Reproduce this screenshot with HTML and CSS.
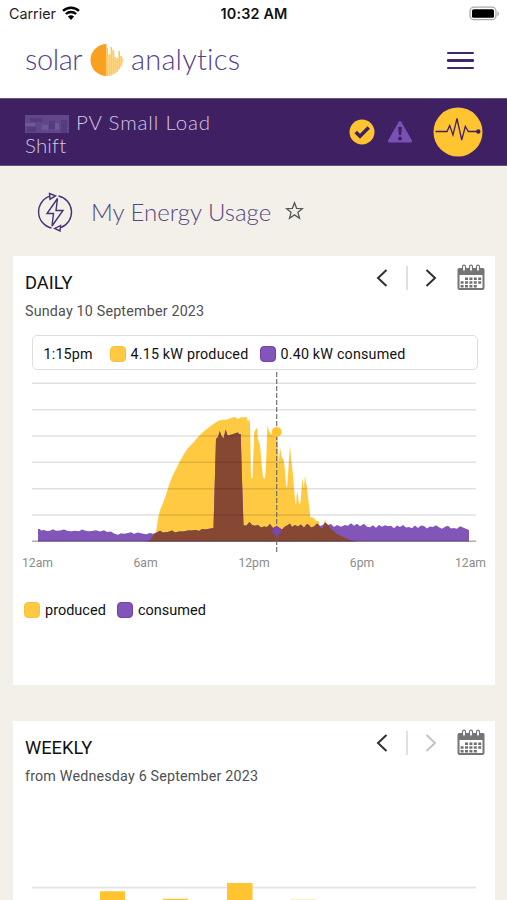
FILE: index.html
```html
<!DOCTYPE html>
<html lang="en">
<head>
<meta charset="utf-8">
<title>My Energy Usage</title>
<link rel="stylesheet" href="styles.css">
</head>
<body>
<svg class="defs" width="0" height="0">
  <defs>
    <symbol id="calendar" viewBox="0 0 28 27">
      <path d="M2 4h24a1.500 1.500 0 0 1 1.500 1.500V24a2 2 0 0 1-2 2H2.500a2 2 0 0 1-2-2V5.500A1.500 1.500 0 0 1 2 4z" fill="#757575"/>
      <path d="M2.500 11h23v13h-23z" fill="#fff"/>
      <g fill="#fff" stroke="#757575" stroke-width="1.200"><rect x="5.500" y="1.200" width="3" height="6" rx="1.500"/><rect x="12.500" y="1.200" width="3" height="6" rx="1.500"/><rect x="19.500" y="1.200" width="3" height="6" rx="1.500"/></g>
      <g stroke="#707070" stroke-width="2.400" stroke-dasharray="3 1.400"><path d="M8 14.800h17M3.600 18.500h21M3.600 22.200h17"/></g>
    </symbol>
    <symbol id="chevron" viewBox="0 0 12 20"><path d="M10.500 2 2 10l8.500 8" fill="none" stroke="currentColor" stroke-width="2"/></symbol>
  </defs>
</svg>

<div class="status">
  <div class="carrier"><span>Carrier</span>
    <svg width="18" height="14" viewBox="0 0 18 14" fill="none" stroke="#000" stroke-width="2.400"><path d="M1 4.900a11.600 11.600 0 0 1 16 0M3.900 8a7.400 7.400 0 0 1 10.200 0"/><path d="M9 14 5.900 10.600a4.500 4.500 0 0 1 6.200 0z" fill="#000" stroke="none"/></svg>
  </div>
  <div class="clock">10:32 AM</div>
  <svg class="battery" width="32" height="16" viewBox="0 0 32 16"><rect x="2" y="1.200" width="26" height="12.500" rx="4" fill="#fff" stroke="#aaa" stroke-width="1.300"/><rect x="4" y="3.200" width="22" height="8.500" rx="1.500" fill="#000"/><path d="M29.500 5.300v5c2-1 2-4 0-5z" fill="#aaa"/></svg>
</div>

<header class="header">
  <div class="logo">
    <span class="logo-solar">solar</span>
    <svg width="34" height="34" viewBox="0 0 34 34">
      <path d="M16.500 1a16 16 0 0 0 0 32z" fill="#f9a01f"/>
      <g fill="#ffc957"><path d="M16.500 5h1.500v28h-1.500zM18.500 12h1.500v20.800h-1.500zM20.500 4h1.500v28.200h-1.500zM22.500 7h1.500v24.200h-1.500zM24.500 14h1.500v16h-1.500zM26.500 15h1.500v13.500h-1.500zM28.500 8h1.500v18h-1.500zM30.500 13h1.500v10h-1.500zM32.300 15h.8v5h-.8z"/></g>
      <path d="M16.500 11h5v21.500l-5 .5zM21.500 8h3v23l-3 1zM24.500 16h4v12l-4 3zM28.500 13h3.500v10l-3.500 4z" fill="#ffc957" opacity=".5"/>
    </svg>
    <span class="logo-analytics">analytics</span>
  </div>
  <div class="menu"><i></i><i></i><i></i></div>
</header>

<section class="site">
  <div class="site-name">
    <svg width="44" height="18" viewBox="0 0 44 18"><path d="M0 0h44v18H0z" fill="#60468b"/><path d="M5 3h12v4H5zM2 12h9v5H2zM24 6h6v8h-6zM36 5h6v13h-6z" fill="#553b80"/><path d="M0 8h10v3H0zM17 10h6v5h-6zM30 8h4v7h-4z" fill="#705796"/></svg><span class="first">PV Small Load</span><br><span class="second">Shift</span>
  </div>
  <svg class="ok" width="26" height="26" viewBox="0 0 26 26"><circle cx="13" cy="13" r="12.500" fill="#ffc42f"/><path d="m6.700 13 4.300 4.300 8.700-8.800" fill="none" stroke="#3e2063" stroke-width="3.500"/></svg>
  <svg class="warn" width="26" height="24" viewBox="0 0 26 24"><path d="M13 2.500 23.500 21h-21z" fill="#7b50b4" stroke="#7b50b4" stroke-width="3" stroke-linejoin="round"/><path d="M11.200 7h3.600l-.6 8h-2.400z" fill="#3e2063"/><circle cx="13" cy="18.500" r="1.900" fill="#3e2063"/></svg>
  <svg class="pulse" width="50" height="50" viewBox="0 0 50 50"><circle cx="25" cy="25" r="24.500" fill="#ffc42f"/><path d="M2.500 24.500H14l2.700-6 3.300 9.500L24 11.500 28.700 33l3.600-13.500 3 5H45" fill="none" stroke="#3e2063" stroke-width="1.300"/><circle cx="45.300" cy="24.500" r="2.200" fill="#3e2063"/></svg>
</section>

<div class="title">
  <svg width="36" height="40" viewBox="0 0 36 40" fill="none" stroke="#463274" stroke-width="1.400">
    <path d="M21.500 4A16.500 16.500 0 0 1 24 35.500M14.500 36A16.500 16.500 0 0 1 13 4.200"/>
    <path d="m12.500 1.500 6 2.300-5.500 3.400zM23.500 33.500l-5.800 3 5.300 2.500z"/>
    <path d="M20.500 6.500 10 21.500h6.500L15 34l11-15.500h-7z"/>
  </svg>
  <h1>My Energy Usage</h1>
  <svg class="star" width="19" height="19" viewBox="0 0 19 19"><path d="m9.500 1.800 2.100 5.500 5.900.4-4.600 3.600 1.600 5.900-5-3.300-5 3.300 1.600-5.900-4.600-3.600 5.900-.4z" fill="none" stroke="#555" stroke-width="1.300"/></svg>
</div>

<main>
  <article class="card daily">
    <div class="card-head">
      <div><h2>DAILY</h2><p>Sunday 10 September 2023</p></div>
      <div class="nav">
        <svg class="prev" width="12" height="20"><use href="#chevron"/></svg><i></i>
        <svg class="next" width="12" height="20"><use href="#chevron"/></svg>
        <svg class="cal" width="28" height="27"><use href="#calendar"/></svg>
      </div>
    </div>
    <div class="readout">
      <span class="time">1:15pm</span>
      <b class="swatch yellow"></b><span class="made">4.15 kW produced</span>
      <b class="swatch purple"></b><span class="used">0.40 kW consumed</span>
    </div>
    <svg class="chart" width="482" height="205" viewBox="13 370 482 205">
      <defs>
        <path id="produced" d="M146 541.500 150 540 154 535 156 532 158 519 160 510 163 503 166 495 169 485 172 477 176 469 180 461 184 454 188 448 193 443 198 437 203 432 208 428 214 423.500 219 420.500 222 420 227 419.500 231 418 235 417 238 419 240 417.500 246.700 417 248 422 249 419 250 422 251 478 252.500 478 254.300 430 255 432 255.700 429 257.300 428 257.700 438 260 445 261.700 465 263 477 265 479 266 465 267.500 425 268.700 430 270.700 434 277.700 436 278.700 464 280 447 281.700 457 283.700 460 285 470 286 485 287 488 288 475 289.300 455 290 445 291 458 292.700 472 294 488 295.300 503 296 505 296.700 495 297.700 492 298.700 502 300 505 301 498 301.700 485 302.700 478 303.300 486 304 488 305 475 305.700 482 306.700 485 307.700 495 309 505 310.300 517 314 518 316 521 318.700 521 320 528 323 528 324.700 520 327.300 524 329 526 332 530 337 534 343 537 350 540 357 541.500z"/>
        <path id="consumed" d="M38 541.500V529h2l1 1.500 3-.5 3 1 3-.3 3-1.500 3 1.500 4-.2 4-1 4 1.500 3 .2 4-.5 4 .6 3-1.800 2 .7 4 1 4-.2 4-.8 4 1.300 4-1.200 3 1.800 4-.5 3 2 4 1.200 3-1.500 3 .5 4-.8 3-.7 3 1.500 4-1.300 4 1 4 .8 4-1.300 3 .7 4-1.200 3-1.700 3 1.800 5-.5 4-1.700 3 2 4-1 4 .2 5-1 4-.2 4-.5 3 1 3-2 3 .7L213.500 528 216 439 218 437 219.700 431 221.500 436 223.500 438.500 225.700 429.500 227.500 435.500 232 434.500 236 433 238 432.500 239 434 240.700 434 242 480 243.500 525.500h3l3-3.500 2.500 3 3 .7 3-.7 3 2.500 3-1 3 .5 3-3 3 4 3-1.500 3 1 3 2 3-3 3-1.500 2-1.500 2 3.500 3-2 3 1.500 3-2 3 3 3-3.500 2 1 2 2.500 3-1 3-3 3 2.500 3-1 2-2.500 3 2.500 3-1 3 3 3-2 4 1.700 4-1.700 3 .7 3-2.500 3 2.500 3-2 3 2.500 4-2.500 3 3 3 .5 3-2 3 2.500 3-2.700 3 1.700 3-1.500 3 1 3-.5 3 2.500 3-2.800 3 1.500 3-2 3 2.500 3-.5 3 1.300 3-2.800 3 2.500 3-2.500 3 .5 3 2.500 3-2 3 .5 3-1.700 3 2 3 1.500 3-2 3-1 3 2.800 3-.5 3 .8 3-2.500 3 1.200L469 530V541.500z"/>
        <clipPath id="overlap"><use href="#produced"/></clipPath>
      </defs>
      <use href="#produced" fill="#ffc942"/>
      <use href="#consumed" fill="#8256b8"/>
      <use href="#consumed" fill="#874833" clip-path="url(#overlap)"/>
      <g stroke="#000" stroke-opacity=".12" stroke-width="1.500"><path d="M32 383.300h444M32 409.700h444M32 436h444M32 462.300h444M32 488.700h444M32 514.900h444"/></g>
      <path d="M32 541.300h444" stroke="#392a40" stroke-opacity=".4" stroke-width="1.500"/>
      <path d="M276.700 372v181" stroke="#666" stroke-width="1.100" stroke-dasharray="5 2"/>
      <circle cx="276.700" cy="432" r="5" fill="#ffc42f"/><path d="m276.700 525.500 5.500 5.500-5.500 5.500-5.500-5.500z" fill="#7846af"/>
      <g class="axis" text-anchor="middle"><text x="37.500" y="567">12am</text><text x="145.500" y="567">6am</text><text x="254" y="567">12pm</text><text x="362" y="567">6pm</text><text x="470.500" y="567">12am</text></g>
    </svg>
    <div class="legend"><b class="swatch yellow"></b><span class="produced">produced</span><b class="swatch purple"></b><span>consumed</span></div>
  </article>

  <article class="card weekly">
    <div class="card-head">
      <div><h2>WEEKLY</h2><p>from Wednesday 6 September 2023</p></div>
      <div class="nav">
        <svg class="prev" width="12" height="20"><use href="#chevron"/></svg><i></i>
        <svg class="next disabled" width="12" height="20"><use href="#chevron"/></svg>
        <svg class="cal" width="28" height="27"><use href="#calendar"/></svg>
      </div>
    </div>
    <svg class="week-chart" width="482" height="40" viewBox="13 860 482 40"><path d="M32 887.700h444" stroke="#e3e3e3" stroke-width="1.700"/><path d="M100 891.300h25V900h-25zM163 898.800h25V900h-25zM227 883h25.500v17H227z" fill="#ffc42f"/><path d="M291 899h25v1h-25z" fill="#fff0b8"/></svg>
  </article>
</main>
</body>
</html>
```
FILE: styles.css
```css
* { box-sizing: border-box; }
body { margin: 0; width: 507px; height: 900px; overflow: hidden; background: #f3f0e9; color: #111; font-family: Roboto, sans-serif; }
svg { display: block; flex: none; }
.defs { position: absolute; }
h1, h2, p { margin: 0; font-weight: 400; }

.status { height: 28px; background: #fff; display: grid; grid-template-columns: 1fr auto 1fr; align-items: center; padding: 0 7px 0 9px; font: 500 14.300px/28px Inter, sans-serif; }
.carrier { display: flex; align-items: center; gap: 6px; font-weight: 400; color: #222; }
.carrier svg { margin-top: -3px; }
.clock { font-weight: 600; font-size: 14.400px; letter-spacing: .15px; margin-right: 1px; }
.battery { justify-self: end; margin-top: -1px; }

.header { height: 70px; background: #fff; display: flex; justify-content: space-between; padding: 0 33px 0 25px; }
.logo { display: flex; color: #56448a; font: 300 29px/34px Lato, sans-serif; padding-top: 14px; }
.logo svg { margin: 1px 7px 0 8px; }
.logo-solar { width: 57px; letter-spacing: -.4px; }
.logo-analytics { letter-spacing: .2px; }
.menu { width: 27px; padding-top: 24px; display: flex; flex-direction: column; gap: 5px; }
.menu i { height: 2.300px; background: #432569; border-radius: 1px; }

.site { height: 68px; background: #3e2063; border-top: 1px solid #685080; border-bottom: 1px solid #685080; display: flex; padding: 0 24px 0 25px; color: #d4c7e3; }
.site-name { width: 325px; padding-top: 12px; font: 300 20.500px/23px Lato, sans-serif; }
.site-name svg { display: inline-block; vertical-align: -3px; margin-right: 7px; }
.first { letter-spacing: .85px; }
.second { letter-spacing: .15px; }
.ok { margin-top: 20px; }
.warn { margin: 21px 0 0 12px; }
.pulse { margin: 8px 0 0 20px; }

.title { height: 90px; display: flex; padding: 26px 0 0 37px; }
.title h1 { margin-left: 18px; width: 180px; white-space: nowrap; font: 300 24px/40px Lato, sans-serif; color: #56477f; letter-spacing: 0; }
.star { margin: 9px 0 0 14px; }

main { padding: 0 12px 0 13px; }
.card { background: #fff; width: 482px; }
.daily { height: 429px; margin-bottom: 36px; }
.weekly { height: 179px; overflow: hidden; }
.card-head { display: flex; justify-content: space-between; height: 79px; padding: 0 10px 0 12px; }
.card h2 { font-size: 18.300px; line-height: 22px; padding-top: 16px; }
.card p { font-size: 14.300px; line-height: 18px; margin-top: 8px; letter-spacing: .18px; color: #505050; }
.nav { display: flex; color: #303030; }
.nav i { width: 2px; height: 24px; background: #e0e0e0; margin: 10px 17px 0 18px; }
.prev, .next { margin-top: 12px; }
.next { transform: scaleX(-1); }
.disabled { color: #c4c4c4; }
.cal { margin: 8px 0 0 20px; }

.readout { height: 35px; width: 446px; margin: 0 0 0 18.500px; border: 1.500px solid #dedede; border-radius: 5px; display: flex; align-items: center; font-size: 14.300px; letter-spacing: .19px; padding: 2px 0 0 11px; }
.swatch { width: 16px; height: 16px; border-radius: 4px; flex: none; margin-right: 5px; }
.yellow { background: #ffc942; border: 1px solid #f8c13a; }
.purple { background: #8256b8; border: 1px solid #7141aa; }
.time { width: 66px; }
.made { width: 129px; }
.chart { display: block; }
.axis { font: 12.200px Roboto, sans-serif; fill: #8b8b8b; }
.legend { height: 20px; margin: 25px 0 0 11px; display: flex; align-items: center; font-size: 14.500px; }
.produced { width: 72px; }
.week-chart { margin-top: 60px; }
```
